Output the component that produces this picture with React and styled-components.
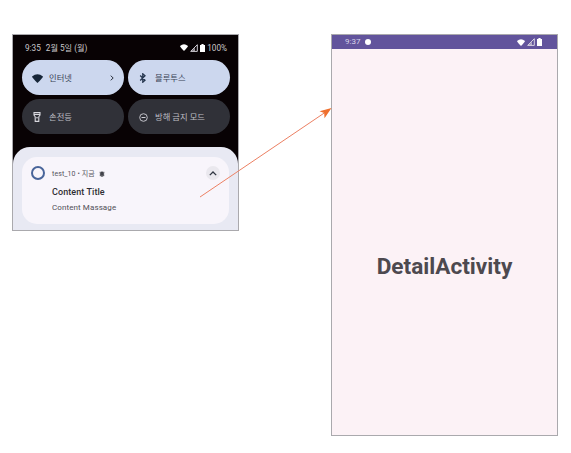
import React from "react";
import styled, { createGlobalStyle } from "styled-components";

const GlobalStyle = createGlobalStyle`
  *, *::before, *::after { box-sizing: border-box; }
  body { margin: 0; background: #fff; font-family: Roboto, "Noto Sans CJK KR", sans-serif; overflow: hidden; }
  svg { display: block; flex: none; }
`;

const Stage = styled.main`
  position: relative;
  display: flex;
  align-items: flex-start;
  justify-content: space-between;
  width: 571px;
  height: 453px;
  padding: 34px 13px 0 12px;
`;

const Phone = styled.section`
  display: flex;
  flex-direction: column;
  border: 1px solid #aaa9ad;
  overflow: hidden;
`;

const ShadePhone = styled(Phone)`
  width: 227px;
  height: 197px;
  background: #080204;
`;

const DetailPhone = styled(Phone)`
  width: 227px;
  height: 402px;
  background: #fcf2f6;
`;

const Label = styled.span`
  font-size: ${(p) => p.$size}px;
  font-weight: ${(p) => p.$weight || 400};
  letter-spacing: ${(p) => p.$spacing || 0}px;
  color: ${(p) => p.$color};
  line-height: 1;
  white-space: pre;
`;

const StatusRow = styled.header`
  display: flex;
  align-items: center;
  flex: none;
  height: 25px;
  padding: 1px 11px 0 12px;
`;

const StatusDate = styled.span`
  display: flex;
  gap: 5px;
`;

const DetailBar = styled(StatusRow)`
  height: 14px;
  padding: 0 15px 0 13px;
  background: #62549c;
`;

const Dot = styled.i`
  width: 6px;
  height: 6px;
  margin-left: 5px;
  border-radius: 50%;
  background: #fff;
`;

const StatusIcons = styled.div`
  display: flex;
  align-items: center;
  gap: 2px;
  margin-left: auto;
`;

const Tiles = styled.div`
  display: grid;
  grid-template-columns: 102px 102px;
  grid-auto-rows: 35px;
  gap: 4px;
  padding-left: 9px;
`;

const Tile = styled.div`
  display: flex;
  align-items: center;
  padding: 1px 10px 0;
  border-radius: 18px;
  background: ${(p) => (p.$active ? "#ccd7ee" : "#303138")};
`;

const TileIcon = styled.span`
  display: flex;
  justify-content: center;
  width: 10px;
  margin-right: 7px;
`;

const TileLabel = styled(Label)`
  padding-top: 1px;
`;

const TileArrow = styled.span`
  margin-left: auto;
`;

const Sheet = styled.div`
  flex: 1;
  margin-top: 13px;
  padding: 10px 9px 6px;
  border-radius: 17px 17px 0 0;
  background: #e8e9f3;
`;

const Notice = styled.article`
  display: flex;
  height: 67px;
  padding: 9px 9px 0 9px;
  border-radius: 15px;
  background: #f8f5fb;
`;

const NoticeBody = styled.div`
  display: flex;
  flex-direction: column;
  align-items: flex-start;
  flex: 1;
  padding-left: 7px;
`;

const NoticeMeta = styled.div`
  display: flex;
  align-items: center;
  gap: 4px;
  height: 16px;
  margin-bottom: 6px;
`;

const NoticeTitle = styled(Label)`
  margin-bottom: 7px;
`;

const Ring = styled.i`
  width: 14px;
  height: 14px;
  border: 2.5px solid #49659a;
  border-radius: 50%;
`;

const Collapse = styled.span`
  display: flex;
  align-items: center;
  justify-content: center;
  width: 14px;
  height: 14px;
  border-radius: 50%;
  background: #eae8ee;
`;

const DetailContent = styled.div`
  display: flex;
  align-items: center;
  justify-content: center;
  flex: 1;
  padding-top: 50px;
`;

const Connector = styled.svg`
  position: absolute;
  left: 0;
  top: 0;
  pointer-events: none;
`;

const Wifi = ({ width = 10, height = 8, color = "#fff" }) => (
  <svg width={width} height={height} viewBox="0 0 10 8" preserveAspectRatio="none">
    <path d="M0 2.2Q5 -1.9 10 2.2Q9.8 3.4 5 8Q.2 3.4 0 2.2Z" fill={color} />
  </svg>
);

const Signal = () => (
  <svg width="8" height="8" viewBox="0 0 8 8">
    <path d="M.7 7.4L7.3.7V7.4Z" fill="none" stroke="#e5e2ea" strokeWidth=".9" />
    <path d="M1.5 7.3L5 3.8V7.3Z" fill="#d5d2dc" opacity=".7" />
  </svg>
);

const Battery = () => (
  <svg width="5" height="8" viewBox="0 0 5 8">
    <path d="M1.4 0H3.6V1H5V8H0V1H1.4Z" fill="#fff" />
  </svg>
);

const Bluetooth = () => (
  <svg width="8" height="10" viewBox="0 0 8 10">
    <path d="M1.2 2.5L6 7.2L3.8 9.2V.8L6 2.8L1.2 7.5" fill="none" stroke="#25364e" strokeWidth="1.3" />
  </svg>
);

const Flashlight = () => (
  <svg width="8" height="10" viewBox="0 0 8 10">
    <path d="M1 .6H7V3L5.8 4.8V9.4H2.2V4.8L1 3ZM1 2.5H7" fill="none" stroke="#d9d9df" strokeWidth="1.1" />
    <circle cx="4" cy="5.8" r=".8" fill="#d9d9df" />
  </svg>
);

const DoNotDisturb = () => (
  <svg width="9" height="9" viewBox="0 0 9 9">
    <circle cx="4.5" cy="4.5" r="3.8" fill="none" stroke="#cfcfd6" strokeWidth=".9" />
    <path d="M2.5 4.5H6.5" stroke="#cfcfd6" strokeWidth="1" />
  </svg>
);

const Chevron = ({ up }) => (
  <svg width={up ? 8 : 4} height={up ? 5 : 6} viewBox={up ? "0 0 8 5" : "0 0 4 6"}>
    <path d={up ? "M.8 4.1L4 1L7.2 4.1" : "M.7 .7L3.2 3L.7 5.3"} fill="none" stroke="#303642" strokeWidth={up ? 1.3 : 1} />
  </svg>
);

const Bell = () => (
  <svg width="6" height="6" viewBox="0 0 6 6">
    <path d="M1.2 4.3V1.8Q1.4.7 3 .7Q4.6.7 4.8 1.8V4.3L5.2 4.8H.8ZM2.3 5.2H3.7V5.6H2.3ZM.2 1.7L1 .6M5.8 1.7L5 .6" fill="#42434a" stroke="#42434a" strokeWidth=".4" />
  </svg>
);

export default function App() {
  return (
    <>
      <GlobalStyle />
      <Stage>
        <ShadePhone>
          <StatusRow>
            <StatusDate>
              <Label $size={8.2} $color="#cac7ca">9:35</Label>
              <Label $size={8.2} $color="#cac7ca">2월 5일 (월)</Label>
            </StatusDate>
            <StatusIcons>
              <Wifi width={8} height={7} />
              <Signal />
              <Battery />
              <Label $size={8.2} $color="#cac7ca">100%</Label>
            </StatusIcons>
          </StatusRow>
          <Tiles>
            <Tile $active>
              <TileIcon><Wifi width={11} height={9} color="#172638" /></TileIcon>
              <TileLabel $size={8.3} $color="#3a4355">인터넷</TileLabel>
              <TileArrow><Chevron /></TileArrow>
            </Tile>
            <Tile $active>
              <TileIcon><Bluetooth /></TileIcon>
              <TileLabel $size={8.3} $color="#3a4355">블루투스</TileLabel>
            </Tile>
            <Tile>
              <TileIcon><Flashlight /></TileIcon>
              <TileLabel $size={8.3} $color="#bdbdc3">손전등</TileLabel>
            </Tile>
            <Tile>
              <TileIcon><DoNotDisturb /></TileIcon>
              <TileLabel $size={8.3} $color="#bdbdc3">방해 금지 모드</TileLabel>
            </Tile>
          </Tiles>
          <Sheet>
            <Notice>
              <Ring />
              <NoticeBody>
                <NoticeMeta>
                  <Label $size={7} $spacing={0.1} $color="#55545b">test_10 • 지금</Label>
                  <Bell />
                </NoticeMeta>
                <NoticeTitle $size={9} $spacing={0.08} $weight={500} $color="#2f2e34">Content Title</NoticeTitle>
                <Label $size={8} $spacing={0.1} $color="#514f57">Content Massage</Label>
              </NoticeBody>
              <Collapse><Chevron up /></Collapse>
            </Notice>
          </Sheet>
        </ShadePhone>
        <DetailPhone>
          <DetailBar>
            <Label $size={8} $color="#d9d3e8">9:37</Label>
            <Dot />
            <StatusIcons>
              <Wifi width={8} height={7} />
              <Signal />
              <Battery />
            </StatusIcons>
          </DetailBar>
          <DetailContent>
            <Label $size={22.6} $weight={700} $color="#4d494f">DetailActivity</Label>
          </DetailContent>
        </DetailPhone>
        <Connector width="571" height="453" viewBox="0 0 571 453">
          <path d="M200 197L325 112.5" stroke="#ec8063" strokeWidth="1" />
          <path d="M331.5 108L324.5 118.2L324.2 113L319.5 111.2Z" fill="#ef702f" />
        </Connector>
      </Stage>
    </>
  );
}
